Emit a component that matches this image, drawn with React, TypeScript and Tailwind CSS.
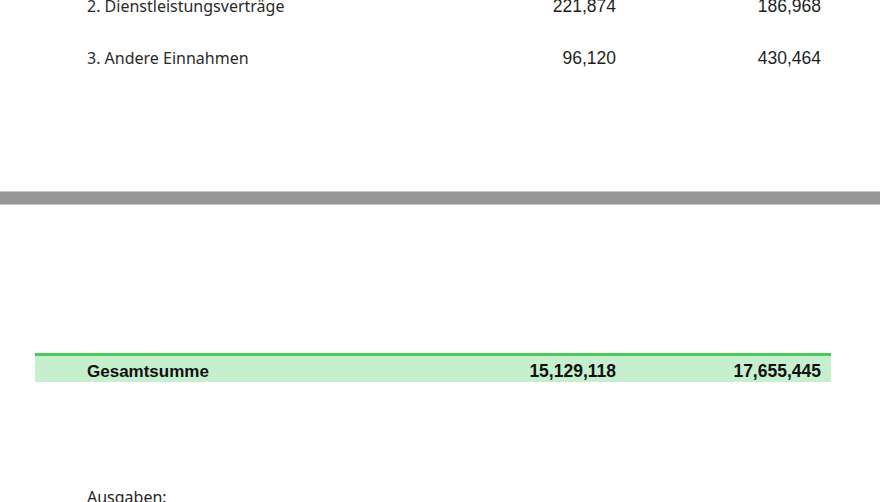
const rows = [
  { label: "2. Dienstleistungsverträge", a: "221,874", b: "186,968" },
  { label: "3. Andere Einnahmen", a: "96,120", b: "430,464" },
];

function Row({ label, a, b, bold }: { label: string; a: string; b: string; bold?: boolean }) {
  const num = `text-right text-[17.5px] ${bold ? "font-bold text-[#111]" : "text-[#1f1f1f]"}`;
  return (
    <div className={`flex h-full items-center ${bold ? "pt-[5px]" : ""}`}>
      <div
        className={`w-[381px] pl-[52px] ${bold ? "text-[17px] font-bold text-[#111]" : "text-[16px] text-[#2a2a2a]"}`}
        style={{ fontFamily: bold ? "'Liberation Sans', Arial, sans-serif" : "'Noto Sans', sans-serif" }}
      >
        {label}
      </div>
      <div className={`w-[200px] ${num}`} style={{ fontFamily: "'Liberation Sans', Arial, sans-serif" }}>
        {a}
      </div>
      <div className={`w-[205px] ${num}`} style={{ fontFamily: "'Liberation Sans', Arial, sans-serif" }}>
        {b}
      </div>
    </div>
  );
}

export default function App() {
  return (
    <div className="h-[502px] w-[880px] overflow-hidden bg-white">
      <div className="-mt-[20px] flex flex-col">
        {rows.map((r) => (
          <div key={r.label} className="h-[52px] pl-[35px]">
            <Row {...r} />
          </div>
        ))}
      </div>

      <div className="mt-[107px] h-[14px] border-y border-[#c4c4c4] bg-[#969696]" />

      <div className="mt-[148px] ml-[35px] h-[29px] w-[796px] border-t-[3px] border-[#4cc95b] bg-[#c6efce]">
        <Row label="Gesamtsumme" a="15,129,118" b="17,655,445" bold />
      </div>

      <div
        className="mt-[103px] pl-[87px] text-[16px] text-[#1f1f1f]"
        style={{ fontFamily: "'Noto Sans', sans-serif" }}
      >
        Ausgaben:
      </div>
    </div>
  );
}
